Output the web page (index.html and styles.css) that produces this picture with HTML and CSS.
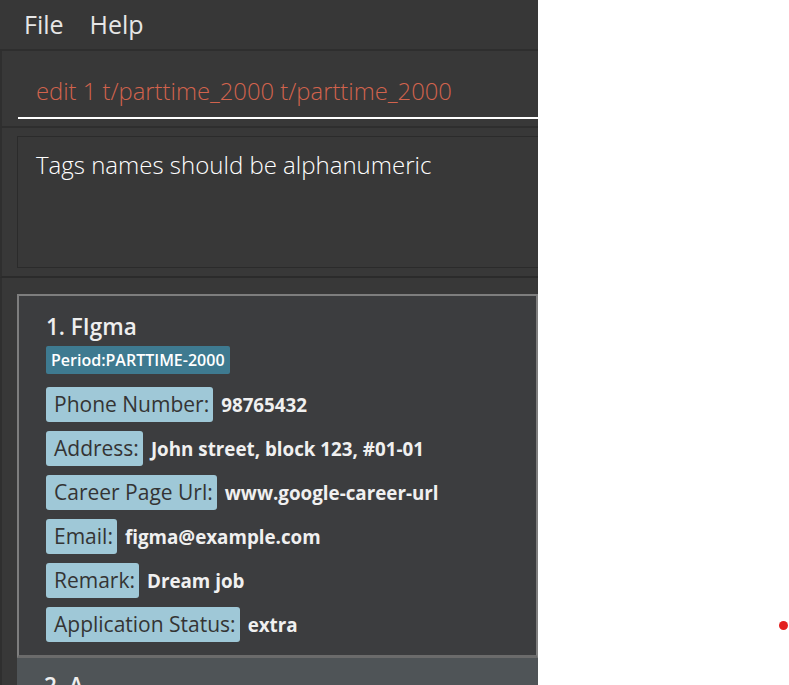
FILE: index.html
```html
<!DOCTYPE html>
<html>
<head>
<meta charset="utf-8">
<link rel="stylesheet" href="styles.css">
</head>
<body>
<div class="page">
  <div class="app">
    <div class="menubar">
      <span class="menu-item">File</span>
      <span class="menu-item">Help</span>
    </div>
    <div class="command-panel">
      <div class="command-field">edit 1 t/parttime_2000 t/parttime_2000</div>
    </div>
    <div class="result-panel">
      <div class="result-box">Tags names should be alphanumeric</div>
    </div>
    <div class="list-panel">
      <div class="card">
        <div class="card-title">1. FIgma</div>
        <div class="tags"><span class="tag">Period:PARTTIME-2000</span></div>
        <div class="field"><span class="label">Phone Number:</span><span class="value">98765432</span></div>
        <div class="field"><span class="label">Address:</span><span class="value">John street, block 123, #01-01</span></div>
        <div class="field"><span class="label">Career Page Url:</span><span class="value">www.google-career-url</span></div>
        <div class="field"><span class="label">Email:</span><span class="value">figma@example.com</span></div>
        <div class="field"><span class="label">Remark:</span><span class="value">Dream job</span></div>
        <div class="field"><span class="label">Application Status:</span><span class="value">extra</span></div>
      </div>
      <div class="card card-next">
        <div class="card-title">2. A</div>
      </div>
    </div>
  </div>
  <div class="canvas">
    <span class="dot"></span>
  </div>
</div>
</body>
</html>
```

FILE: styles.css
```css
html, body {
  margin: 0;
  padding: 0;
  background: #ffffff;
  height: 100%;
  overflow: hidden;
}
.page {
  display: flex;
  width: 789px;
  height: 685px;
}
.app {
  width: 538px;
  height: 685px;
  background: #383838;
  display: flex;
  flex-direction: column;
  font-family: "Open Sans", "Noto Sans", sans-serif;
  overflow: hidden;
}
.menubar {
  height: 51px;
  display: flex;
  align-items: center;
  padding: 0 0 2px 24px;
  gap: 26px;
  background: #373737;
  border-bottom: 2px solid #2e2e2e;
  box-sizing: border-box;
  flex: none;
}
.menu-item {
  color: #e6e6e6;
  font-size: 25px;
  font-weight: 400;
}
.command-panel {
  height: 77px;
  box-sizing: border-box;
  padding: 18px 0 0 16px;
  border-left: 2px solid #2f2f2f;
  border-bottom: 2px solid #2e2e2e;
  flex: none;
}
.command-field {
  height: 48px;
  border-bottom: 2px solid #ffffff;
  color: #d2634d;
  font-size: 23.8px;
  font-weight: 300;
  padding-left: 18px;
  line-height: 44px;
}
.result-panel {
  height: 150px;
  box-sizing: border-box;
  padding: 8px 0 8px 15px;
  border-left: 2px solid #2f2f2f;
  border-bottom: 2px solid #2b2b2b;
  flex: none;
}
.result-box {
  height: 100%;
  box-sizing: border-box;
  border: 1px solid #2b2b2b;
  border-right: none;
  padding: 11px 0 0 18px;
  color: #ffffff;
  font-size: 24px;
  font-weight: 300;
  line-height: 34px;
}
.list-panel {
  flex: 1;
  padding: 16px 0 0 15px;
  border-left: 2px solid #2f2f2f;
  display: flex;
  flex-direction: column;
}
.card {
  background: #3c3d3f;
  border: 2px solid #7e7e7e;
  border-bottom: 3px solid #6b6b6b;
  padding: 17px 0 13px 27px;
  display: flex;
  flex-direction: column;
  gap: 9px;
}
.card-next {
  background: #4f5457;
  border: none;
  padding-top: 14px;
}
.card-title {
  color: #eeeeee;
  font-size: 22.5px;
  font-weight: 600;
  line-height: 28px;
}
.tags {
  display: flex;
  margin-top: -4px;
  margin-bottom: 4px;
}
.tag {
  background: #3e7a90;
  color: #ffffff;
  font-size: 16px;
  font-weight: 600;
  padding: 0 5px;
  line-height: 28px;
  border-radius: 2px;
}
.field {
  display: flex;
  align-items: center;
  gap: 8px;
}
.label {
  background: #9fc8d7;
  color: #343434;
  font-size: 21px;
  font-weight: 400;
  line-height: 35px;
  padding: 0 4px 0 8px;
  border-radius: 3px;
}
.value {
  color: #f0f0f0;
  font-size: 18.8px;
  font-weight: 700;
}
.canvas {
  flex: 1;
  position: relative;
}
.dot {
  position: absolute;
  left: 241px;
  top: 621px;
  width: 9px;
  height: 9px;
  border-radius: 50%;
  background: #e3201f;
}
```
